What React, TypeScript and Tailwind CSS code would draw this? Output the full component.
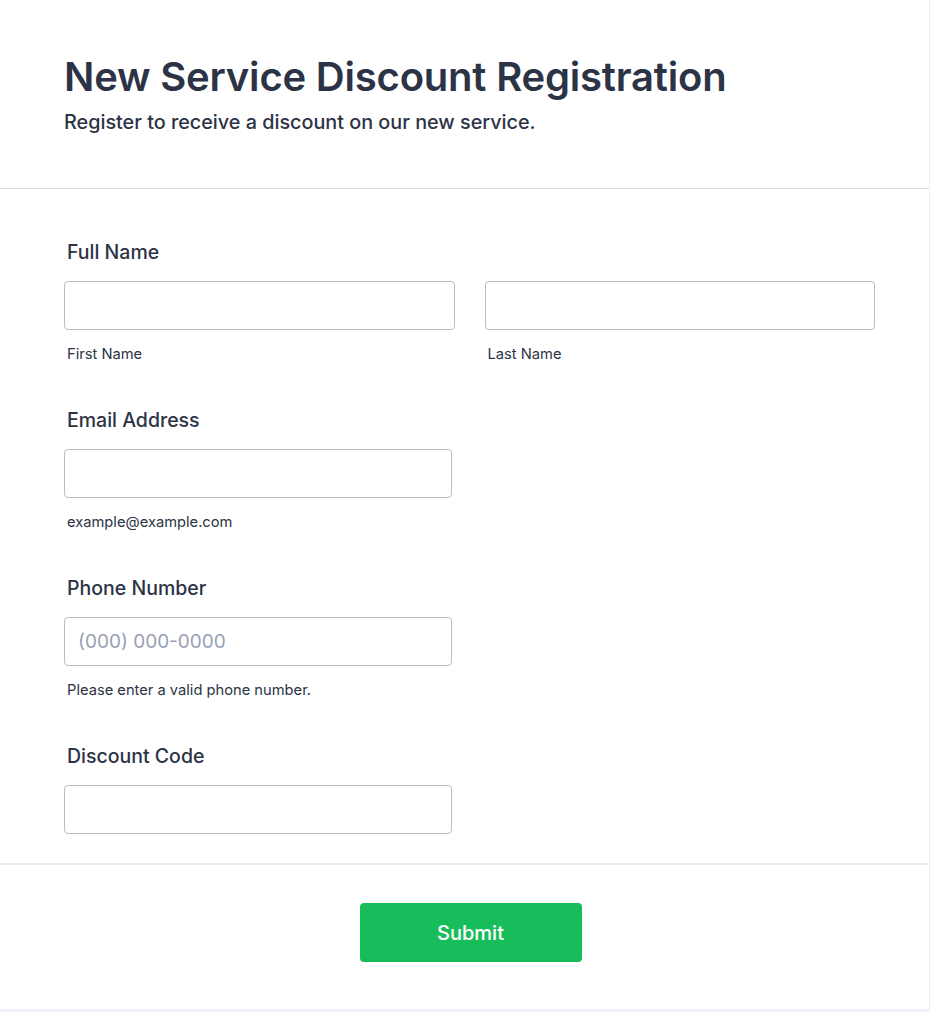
import React from "react";

const font = { fontFamily: "Inter, 'Noto Sans', sans-serif" };

function Label({ children }: { children: React.ReactNode }) {
  return <div className="pl-[3px] text-[19.5px] leading-[24px] font-medium text-[#2c3345]">{children}</div>;
}

function Input({ placeholder }: { placeholder?: string }) {
  return (
    <input
      placeholder={placeholder}
      className="w-full h-[49px] rounded-[4px] border border-[#b8bdc9] bg-white px-[13px] text-[19px] text-[#2c3345] placeholder:text-[#97a0b3] outline-none"
    />
  );
}

function Sub({ children }: { children: React.ReactNode }) {
  return <div className="pl-[3px] mt-[15px] text-[14.7px] leading-[18px] text-[#2c3345]">{children}</div>;
}

export default function App() {
  return (
    <div className="min-h-[1012px] bg-[#f3f3fe]" style={font}>
      <div className="w-[930px] bg-white border-r border-b border-[#ededf5] rounded-br-[3px]">
        <div className="px-[64px] pt-[53px] pb-[54px] border-b border-[#d8d8e8]">
          <h1 className="text-[40px] leading-[48px] font-semibold text-[#2c3345] tracking-[-0.2px]">
            New Service Discount Registration
          </h1>
          <p className="mt-[9px] text-[19.8px] leading-[24px] font-medium text-[#2c3345]">
            Register to receive a discount on our new service.
          </p>
        </div>

        <div className="pl-[64px] pr-[54px] pt-[51px] pb-[29px] flex flex-col gap-[45px]">
          <div>
            <Label>Full Name</Label>
            <div className="mt-[17px] grid grid-cols-2 gap-[30px]">
              <div>
                <Input />
                <Sub>First Name</Sub>
              </div>
              <div>
                <Input />
                <Sub>Last Name</Sub>
              </div>
            </div>
          </div>

          <div>
            <Label>Email Address</Label>
            <div className="mt-[17px] w-[388px]">
              <Input />
              <Sub>example@example.com</Sub>
            </div>
          </div>

          <div>
            <Label>Phone Number</Label>
            <div className="mt-[17px] w-[388px]">
              <Input placeholder="(000) 000-0000" />
              <Sub>Please enter a valid phone number.</Sub>
            </div>
          </div>

          <div>
            <Label>Discount Code</Label>
            <div className="mt-[17px] w-[388px]">
              <Input />
            </div>
          </div>
        </div>

        <div className="border-t-2 border-[#eaeaf0] flex justify-center pl-[12px] pt-[38px] pb-[47px]">
          <button className="w-[222px] h-[59px] rounded-[4px] bg-[#18bd5b] text-white text-[20px] font-medium">
            Submit
          </button>
        </div>
      </div>
    </div>
  );
}
